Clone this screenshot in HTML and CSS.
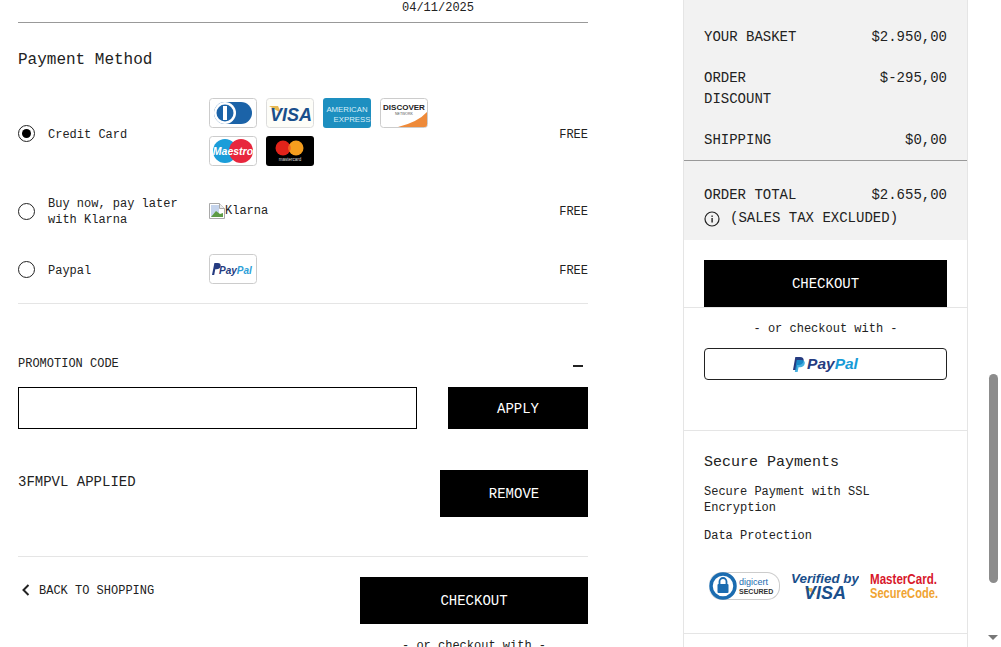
FILE: index.html
```html
<!DOCTYPE html>
<html lang="en">
<head>
  <meta charset="UTF-8" />
  <title>Checkout</title>
  <link rel="stylesheet" href="styles.css">
</head>
<body>
  <div class="page">
    <main class="main">
      <div class="date-row">04/11/2025</div>

      <h2 class="method-title">Payment Method</h2>

      <div class="pay-row pay-card">
        <span class="radio checked"></span>
        <span class="pay-label">Credit Card</span>
        <div class="cards">
          <svg class="card" viewBox="0 0 48 30"><rect x=".5" y=".5" width="47" height="29" rx="3" fill="#fff" stroke="#ccc"/><rect x="5" y="4" width="38" height="22" rx="11" fill="#1b63a8"/><circle cx="16" cy="15" r="11" fill="#fff"/><circle cx="16" cy="15" r="8.500" fill="#1b63a8"/><rect x="14" y="8" width="4" height="14" fill="#fff"/></svg>
          <svg class="card" viewBox="0 0 48 30"><rect x=".5" y=".5" width="47" height="29" rx="3" fill="#fdfdf8" stroke="#ddd"/><path d="M3 8h9l3 7z" fill="#e8b850"/><text x="25" y="23" class="visa-text" text-anchor="middle">VISA</text></svg>
          <svg class="card" viewBox="0 0 48 30"><rect width="48" height="30" rx="3" fill="#1d8fc0"/><text x="24" y="14" class="amex-text" text-anchor="middle">AMERICAN</text><text x="29" y="24" class="amex-text" text-anchor="middle">EXPRESS</text></svg>
          <svg class="card" viewBox="0 0 48 30"><rect x=".5" y=".5" width="47" height="29" rx="3" fill="#fff" stroke="#ccc"/><path d="M47 14v13a2 2 0 0 1-2 2H18q20-5 29-15z" fill="#ee8a3a"/><text x="24" y="12" class="disc-text" text-anchor="middle">DISCOVER</text><text x="24" y="17" class="disc-sub" text-anchor="middle">NETWORK</text></svg>
          <svg class="card" viewBox="0 0 48 30"><rect x=".5" y=".5" width="47" height="29" rx="3" fill="#fff" stroke="#ccc"/><circle cx="16" cy="15" r="12" fill="#1b9dd9"/><circle cx="32" cy="15" r="12" fill="#e8263d"/><text x="24" y="19" class="mae-text" text-anchor="middle">Maestro</text></svg>
          <svg class="card" viewBox="0 0 48 30"><rect width="48" height="30" rx="3" fill="#000"/><circle cx="17" cy="12" r="7.500" fill="#e2231a"/><circle cx="30" cy="12" r="7.500" fill="#f59e1e"/><path d="M23.500 8a7.500 7.500 0 0 1 0 8 7.500 7.500 0 0 1 0-8z" fill="#f26122"/><text x="24" y="25" class="mc-text" text-anchor="middle">mastercard</text></svg>
        </div>
        <span class="pay-price">FREE</span>
      </div>

      <div class="pay-row pay-klarna">
        <span class="radio"></span>
        <span class="pay-label">Buy now, pay later<br>with Klarna</span>
        <div class="broken">
          <svg class="broken-icon" viewBox="0 0 16 16"><path d="M.5.5h10l5 5v10H.5z" fill="#fff" stroke="#a9a9a9"/><path d="M10.500.5v5h5" fill="#eee" stroke="#a9a9a9"/><rect x="2" y="2" width="8" height="12" fill="#c5d4ec"/><path d="M2 14l5-6 4 3 3-1v4z" fill="#5d9b45"/></svg>Klarna
        </div>
        <span class="pay-price">FREE</span>
      </div>

      <div class="pay-row pay-paypal">
        <span class="radio"></span>
        <span class="pay-label">Paypal</span>
        <svg class="card" viewBox="0 0 48 30"><rect x=".5" y=".5" width="47" height="29" rx="3" fill="#fff" stroke="#ccc"/><path d="M3 21l2.400-12h3.400c2.400 0 3.200 1.600 2.800 3.200-.4 2-2 3-4 3H6.300L5.200 21z" fill="#253b80"/><text x="10" y="19.500" class="pp-small"><tspan fill="#253b80">Pay</tspan><tspan fill="#2e9fd8">Pal</tspan></text></svg>
        <span class="pay-price">FREE</span>
      </div>

      <section class="promo">
        <div class="promo-head">
          <span>PROMOTION CODE</span>
          <span class="minus"></span>
        </div>
        <div class="promo-form">
          <input class="promo-input" type="text">
          <button class="btn btn-apply">APPLY</button>
        </div>
        <div class="promo-applied">
          <span class="applied-code">3FMPVL APPLIED</span>
          <button class="btn btn-remove">REMOVE</button>
        </div>
      </section>

      <div class="bottom-row">
        <a class="back-link">
          <svg class="chevron" viewBox="0 0 8 12"><path d="M6.500 1L1.500 6l5 5" fill="none" stroke="#222" stroke-width="2"/></svg>
          BACK TO SHOPPING
        </a>
        <div class="bottom-actions">
          <button class="btn btn-checkout">CHECKOUT</button>
          <div class="or-with">- or checkout with -</div>
        </div>
      </div>
    </main>

    <aside class="side">
      <div class="summary">
        <div class="sum-lines">
          <div class="sum-row"><span>YOUR BASKET</span><span>$2.950,00</span></div>
          <div class="sum-row"><span>ORDER<br>DISCOUNT</span><span>$-295,00</span></div>
          <div class="sum-row"><span>SHIPPING</span><span>$0,00</span></div>
        </div>
        <div class="sum-total">
          <div class="total-row"><span>ORDER TOTAL</span><span>$2.655,00</span></div>
          <div class="tax-row">
            <svg class="info" viewBox="0 0 16 16"><circle cx="8" cy="8" r="7" fill="none" stroke="#222" stroke-width="1.200"/><rect x="7.400" y="7" width="1.400" height="4.500" fill="#222"/><rect x="7.400" y="4.500" width="1.400" height="1.400" fill="#222"/></svg>
            <span>(SALES TAX EXCLUDED)</span>
          </div>
        </div>
      </div>

      <div class="side-checkout">
        <button class="btn btn-side">CHECKOUT</button>
      </div>

      <div class="side-paypal">
        <div class="or-with">- or checkout with -</div>
        <button class="paypal-btn">
          <svg class="pp-mark" viewBox="0 0 13 16"><path d="M2.500 0h5c3 0 4.500 1.700 4 4.200C11 7 9 8.500 6.200 8.500H4.500L3.500 14H0z" fill="#253b80"/><path d="M4 3h5c2.800 0 4.200 1.500 3.700 4-.5 2.700-2.400 4-5 4H6L5 16H2z" fill="#179bd7" opacity=".8"/></svg>
          <span class="pp-word"><span class="pp-pay">Pay</span><span class="pp-pal">Pal</span></span>
        </button>
      </div>

      <div class="secure">
        <h3 class="secure-title">Secure Payments</h3>
        <p class="secure-text">Secure Payment with SSL Encryption</p>
        <p class="secure-text">Data Protection</p>
        <div class="badges">
          <div class="digicert">
            <svg class="lock" viewBox="0 0 28 28"><circle cx="14" cy="14" r="12" fill="#fff" stroke="#1b6cb0" stroke-width="3.500"/><rect x="8.500" y="12" width="11" height="9" rx="1" fill="#1b6cb0"/><path d="M10.500 12V9.500a3.500 3.500 0 0 1 7 0V12" fill="none" stroke="#1b6cb0" stroke-width="1.800"/></svg>
            <div class="digi-words"><span class="digi-top">digicert</span><span class="digi-bot">SECURED</span></div>
          </div>
          <svg class="vbv" viewBox="0 -5 68 40"><text x="0" y="12" class="vbv-top" textLength="68" lengthAdjust="spacingAndGlyphs">Verified by</text><path d="M14 17h7l3 7z" fill="#e8b850"/><text x="34" y="28" class="vbv-bot" text-anchor="middle">VISA</text></svg>
          <svg class="mcsc" viewBox="0 -5 68 40"><text x="0" y="13" class="mc-top" textLength="67" lengthAdjust="spacingAndGlyphs">MasterCard.</text><text x="0" y="27" class="mc-bot" textLength="68" lengthAdjust="spacingAndGlyphs">SecureCode.</text></svg>
        </div>
      </div>
    </aside>

    <div class="scrollbar">
      <div class="thumb"></div>
      <div class="arrow"></div>
    </div>
  </div>
</body>
</html>
```

FILE: styles.css
```css
html, body {
  margin: 0;
  padding: 0;
  height: 647px;
  overflow: hidden;
  background: #fff;
}

body {
  font-family: "Liberation Mono", monospace;
  color: #222;
  font-size: 14px;
}

.page {
  display: flex;
  height: 647px;
}

.main {
  width: 570px;
  margin-left: 18px;
  flex: none;
}

.date-row {
  height: 22px;
  line-height: 16px;
  font-size: 12px;
  border-bottom: 1px solid #999;
  padding-left: 384px;
}

.method-title {
  margin: 26px 0 0;
  font-size: 16px;
  font-weight: 400;
  line-height: 22px;
}

/* payment rows */
.pay-row {
  display: grid;
  grid-template-columns: 30px 161px 1fr auto;
  align-items: center;
  font-size: 12px;
}

.pay-card {
  margin-top: 27px;
}

.pay-klarna {
  margin-top: 28px;
  height: 32px;
}

.pay-paypal {
  margin-top: 28px;
  padding-bottom: 19px;
  border-bottom: 1px solid #e5e5e5;
}

.radio {
  width: 15px;
  height: 15px;
  border: 1.500px solid #222;
  border-radius: 50%;
  box-sizing: content-box;
  display: flex;
  align-items: center;
  justify-content: center;
}

.pay-card .radio {
  margin-top: 2px;
}

.radio.checked::after {
  content: "";
  width: 9px;
  height: 9px;
  border-radius: 50%;
  background: #000;
}

.pay-label {
  line-height: 16px;
  margin-top: 2px;
}

.pay-price {
  margin-top: 2px;
}

.pay-card .pay-label, .pay-card .pay-price {
  margin-top: 6px;
}

.pay-paypal .pay-label, .pay-paypal .pay-price {
  margin-top: 4px;
}

.cards {
  display: flex;
  flex-wrap: wrap;
  gap: 8px 9px;
  width: 240px;
}

.card {
  width: 48px;
  height: 30px;
  display: block;
}

.visa-text {
  font: italic 700 18px "Liberation Sans", sans-serif;
  fill: #1a4f8b;
}

.amex-text {
  font: 400 7.800px "Liberation Sans", sans-serif;
  fill: #d8eef8;
}

.disc-text {
  font: 700 8px "Liberation Sans", sans-serif;
  fill: #222;
}

.disc-sub {
  font: 400 3.500px "Liberation Sans", sans-serif;
  fill: #555;
}

.mae-text {
  font: italic 700 10.500px "Liberation Sans", sans-serif;
  fill: #fff;
}

.mc-text {
  font: 400 4.500px "Liberation Sans", sans-serif;
  fill: #ddd;
}

.pp-small {
  font: italic 700 10px "Liberation Sans", sans-serif;
}

.broken {
  display: flex;
  align-items: center;
  font-size: 12px;
}

.broken-icon {
  width: 16px;
  height: 16px;
  flex: none;
}

/* promo */
.promo-head {
  margin-top: 52px;
  display: flex;
  justify-content: space-between;
  align-items: center;
  font-size: 12px;
  line-height: 16px;
}

.minus {
  width: 10px;
  height: 1.500px;
  background: #222;
  margin: 4px 5px 0 0;
}

.promo-form {
  display: flex;
  justify-content: space-between;
  margin-top: 15px;
}

.promo-input {
  width: 399px;
  height: 42px;
  box-sizing: border-box;
  border: 1px solid #000;
  background: #fff;
  padding: 0;
}

.btn {
  border: 0;
  background: #000;
  color: #fff;
  font-family: inherit;
  font-size: 14px;
  padding: 0;
}

.btn-apply {
  width: 140px;
  height: 42px;
  padding-top: 2px;
}

.promo-applied {
  display: flex;
  justify-content: space-between;
  margin-top: 41px;
  padding-bottom: 39px;
  border-bottom: 1px solid #e5e5e5;
}

.applied-code {
  line-height: 24px;
}

.btn-remove {
  width: 148px;
  height: 47px;
}

.bottom-row {
  display: flex;
  justify-content: space-between;
  margin-top: 20px;
}

.back-link {
  display: flex;
  align-items: center;
  gap: 9px;
  height: 28px;
  font-size: 12px;
  padding-left: 4px;
}

.chevron {
  width: 8px;
  height: 12px;
  margin-top: -2px;
}

.bottom-actions {
  width: 228px;
}

.btn-checkout {
  width: 228px;
  height: 47px;
}

.or-with {
  font-size: 12px;
  line-height: 16px;
  text-align: center;
}

.bottom-actions .or-with {
  margin-top: 14px;
}

/* sidebar */
.side {
  width: 283px;
  margin-left: 95px;
  flex: none;
  border-left: 1px solid #e5e5e5;
  border-right: 1px solid #e5e5e5;
}

.summary {
  background: #f2f2f2;
}

.sum-lines {
  height: 161px;
  box-sizing: border-box;
  padding: 27px 20px 0;
  border-bottom: 1px solid #999;
  display: flex;
  flex-direction: column;
  gap: 20px;
}

.sum-row, .total-row {
  display: flex;
  justify-content: space-between;
  line-height: 21px;
}

.sum-total {
  height: 79px;
  box-sizing: border-box;
  padding: 24px 20px 0;
}

.tax-row {
  display: flex;
  align-items: center;
  gap: 10px;
  line-height: 21px;
  margin-top: 2px;
}

.info {
  width: 16px;
  height: 16px;
}

.side-checkout {
  padding: 20px 20px 0;
}

.btn-side {
  display: block;
  width: 243px;
  height: 47px;
}

.side-paypal {
  border-top: 1px solid #e5e5e5;
  height: 124px;
  box-sizing: border-box;
  padding: 13px 20px 0;
  border-bottom: 1px solid #e5e5e5;
}

.paypal-btn {
  display: flex;
  align-items: center;
  justify-content: center;
  gap: 2px;
  width: 243px;
  height: 32px;
  margin-top: 11px;
  background: #fff;
  border: 1px solid #222;
  border-radius: 4px;
  padding: 0;
}

.pp-mark {
  width: 12px;
  height: 15px;
}

.pp-word {
  font: italic 700 15.500px "Liberation Sans", sans-serif;
}

.pp-pay {
  color: #253b80;
}

.pp-pal {
  color: #179bd7;
}

.secure {
  height: 203px;
  box-sizing: border-box;
  padding: 22px 20px 0;
  border-bottom: 1px solid #e5e5e5;
}

.secure-title {
  margin: 0;
  font-size: 15px;
  font-weight: 400;
  line-height: 20px;
}

.secure-text {
  margin: 11px 0 0;
  font-size: 12px;
  line-height: 16px;
}

.secure-text + .secure-text {
  margin-top: 12px;
}

.badges {
  display: flex;
  align-items: center;
  justify-content: space-between;
  margin-top: 25px;
  height: 34px;
  padding: 0 9px 0 5px;
}

.digicert {
  display: flex;
  align-items: center;
  width: 70px;
  height: 26px;
  border: 1px solid #ccc;
  border-left: 0;
  border-radius: 13px;
}

.lock {
  width: 28px;
  height: 28px;
  flex: none;
}

.digi-words {
  display: flex;
  flex-direction: column;
  margin-left: 2px;
  font-family: "Liberation Sans", sans-serif;
}

.digi-top {
  color: #1b6cb0;
  font-size: 9px;
  line-height: 10px;
}

.digi-bot {
  color: #333;
  font-size: 7px;
  line-height: 9px;
  font-weight: 700;
}

.vbv, .mcsc {
  width: 68px;
  height: 40px;
  flex: none;
}

.vbv-top {
  font: italic 700 13px "Liberation Sans", sans-serif;
  fill: #1a4f8b;
}

.vbv-bot {
  font: italic 700 18px "Liberation Sans", sans-serif;
  fill: #1a4f8b;
}

.mc-top {
  font: 700 15px "Liberation Sans", sans-serif;
  fill: #d8172b;
}

.mc-bot {
  font: 700 15px "Liberation Sans", sans-serif;
  fill: #f0a432;
}

/* scrollbar */
.scrollbar {
  flex: 1;
  display: flex;
  flex-direction: column;
  align-items: flex-end;
  padding: 374px 3px 0 0;
}

.thumb {
  width: 9px;
  height: 209px;
  background: #8c8c8c;
  border-radius: 5px;
}

.arrow {
  width: 0;
  height: 0;
  margin-top: 52px;
  border-left: 5px solid transparent;
  border-right: 5px solid transparent;
  border-top: 5px solid #777;
}
```
